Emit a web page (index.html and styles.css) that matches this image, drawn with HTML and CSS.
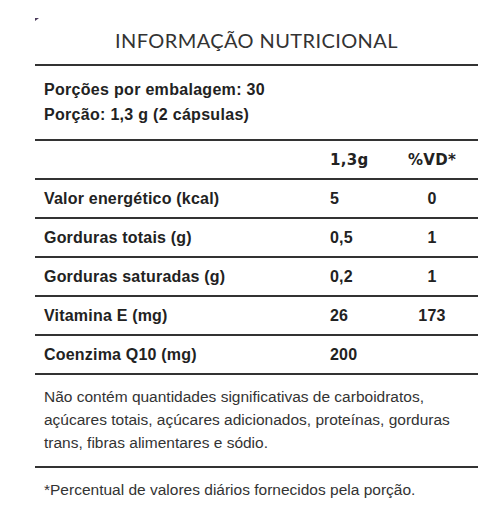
FILE: index.html
```html
<!DOCTYPE html>
<html lang="pt-BR">
<head>
    <meta charset="UTF-8">
    <meta name="viewport" content="width=device-width, initial-scale=1.0">
    <title>Informação Nutricional</title>
    <link rel="stylesheet" href="styles.css">
</head>
<body>
    <div class="label">
        <h1 class="title">INFORMAÇÃO NUTRICIONAL</h1>
        <div class="serving">
            <p>Porções por embalagem: 30</p>
            <p>Porção: 1,3 g (2 cápsulas)</p>
        </div>
        <table class="facts">
            <colgroup>
                <col class="col-name">
                <col class="col-amount">
                <col class="col-vd">
            </colgroup>
            <thead>
                <tr>
                    <th></th>
                    <th class="amount">1,3g</th>
                    <th class="vd">%VD*</th>
                </tr>
            </thead>
            <tbody>
                <tr><td>Valor energético (kcal)</td><td class="amount">5</td><td class="vd">0</td></tr>
                <tr><td>Gorduras totais (g)</td><td class="amount">0,5</td><td class="vd">1</td></tr>
                <tr><td>Gorduras saturadas (g)</td><td class="amount">0,2</td><td class="vd">1</td></tr>
                <tr><td>Vitamina E (mg)</td><td class="amount">26</td><td class="vd">173</td></tr>
                <tr><td>Coenzima Q10 (mg)</td><td class="amount">200</td><td class="vd"></td></tr>
            </tbody>
        </table>
        <p class="note">Não contém quantidades significativas de carboidratos, açúcares totais, açúcares adicionados, proteínas, gorduras trans, fibras alimentares e sódio.</p>
        <p class="footnote">*Percentual de valores diários fornecidos pela porção.</p>
    </div>
</body>
</html>
```

FILE: styles.css
```css
body {
    margin: 0;
    background-color: #fff;
    font-family: "Liberation Sans", Arial, sans-serif;
    color: #222;
}
.label {
    position: relative;
    width: 443px;
    margin: 18px 0 0 35px;
}
/* little corner ticks of the original crop */
.label::before,
.label::after {
    content: "";
    position: absolute;
    left: 0;
    width: 0;
    height: 0;
}
.label::before {
    top: 0;
    border-top: 3px solid #4a3a5a;
    border-right: 4px solid transparent;
}
.label::after {
    bottom: -8px;
    border-bottom: 3px solid #4a3a5a;
    border-right: 4px solid transparent;
}
.title {
    margin: 0;
    padding: 10px 0 12px;
    height: 24px;
    line-height: 24px;
    text-align: center;
    font-family: Lato, sans-serif;
    font-weight: 400;
    font-size: 20px;
    letter-spacing: 0.4px;
    color: #333;
    border-bottom: 2px solid #333;
}
.serving {
    padding: 11px 9px 12px;
}
.serving p {
    margin: 0;
    font-size: 16px;
    font-weight: bold;
    line-height: 25px;
    letter-spacing: 0.3px;
}
.facts {
    width: 100%;
    table-layout: fixed;
    border-collapse: collapse;
    font-size: 16px;
    font-weight: bold;
}
.col-amount {
    width: 56px;
}
.col-vd {
    width: 92px;
}
.facts th,
.facts td {
    border-top: 2px solid #333;
    height: 37px;
    padding: 0 0 0 9px;
    text-align: left;
    letter-spacing: 0.2px;
}
.facts th {
    font-family: "DejaVu Sans", sans-serif;
    font-size: 15px;
    font-weight: bold;
    letter-spacing: 0.3px;
}
.facts .amount {
    padding-left: 0;
}
.facts .vd {
    padding-left: 0;
    text-align: center;
}
.note {
    margin: 0;
    padding: 10px 9px 12px;
    border-top: 2px solid #333;
    border-bottom: 2px solid #333;
    font-size: 15.5px;
    line-height: 23px;
    color: #333;
}
.footnote {
    margin: 0;
    padding: 12px 9px 0;
    font-size: 15.5px;
    line-height: 20px;
    color: #333;
}
```
